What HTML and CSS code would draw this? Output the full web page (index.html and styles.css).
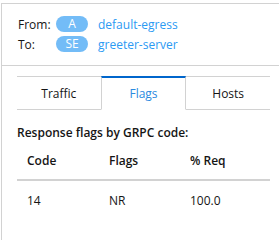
FILE: index.html
```html
<!DOCTYPE html>
<html lang="en">
<head>
<meta charset="UTF-8">
<meta name="viewport" content="width=device-width, initial-scale=1.0">
<title>Edge Flags</title>
<link rel="stylesheet" href="styles.css">
</head>
<body>
<div class="panel">
    <div class="panel-header">
        <div class="endpoint">
            <span class="endpoint-label">From:</span>
            <span class="badge">A</span>
            <a class="endpoint-link" href="#">default-egress</a>
        </div>
        <div class="endpoint">
            <span class="endpoint-label">To:</span>
            <span class="badge">SE</span>
            <a class="endpoint-link" href="#">greeter-server</a>
        </div>
    </div>
    <div class="panel-body">
        <div class="tabs">
            <button class="tab">Traffic</button>
            <button class="tab active">Flags</button>
            <button class="tab">Hosts</button>
        </div>
        <div class="section-title">Response flags by GRPC code:</div>
        <table class="flags-table">
            <thead>
                <tr>
                    <th class="col-code">Code</th>
                    <th class="col-flags">Flags</th>
                    <th>% Req</th>
                </tr>
            </thead>
            <tbody>
                <tr>
                    <td>14</td>
                    <td>NR</td>
                    <td>100.0</td>
                </tr>
            </tbody>
        </table>
    </div>
</div>
</body>
</html>
```

FILE: styles.css
```css
body {
    margin: 0;
    font-family: "Open Sans", sans-serif;
    font-size: 12px;
    color: #151515;
    background-color: #fff;
}
.panel {
    margin: 3px 0 0 1px;
    height: 237px;
    border-top: 1px solid #d2d2d2;
    border-left: 1px solid #d2d2d2;
    overflow: hidden;
}
.panel-header {
    padding: 10px 16px 11px;
    border-bottom: 1px solid #d2d2d2;
}
.endpoint {
    display: flex;
    align-items: center;
    height: 20px;
}
.endpoint-label {
    width: 38px;
}
.badge {
    width: 32px;
    height: 16px;
    line-height: 16px;
    border-radius: 8px;
    background-color: #73bcf7;
    color: #fff;
    text-align: center;
    margin-right: 10px;
}
.endpoint-link {
    color: #2b9af3;
    text-decoration: none;
}
.panel-body {
    padding: 10px 8px 0 15px;
}
.tabs {
    display: flex;
    width: 253px;
    border-top: 1px solid #d2d2d2;
}
.tab {
    flex: 1;
    height: 33px;
    border: none;
    border-bottom: 1px solid #d2d2d2;
    background: #fff;
    font-family: inherit;
    font-size: 12px;
    color: #151515;
    padding: 0;
}
.tab.active {
    border-left: 1px solid #d2d2d2;
    border-right: 1px solid #d2d2d2;
    border-bottom-color: transparent;
    border-top: 2px solid #0066cc;
    margin-top: -1px;
    height: 34px;
    color: #2b8ae0;
}
.section-title {
    margin-top: 14px;
    font-weight: 600;
}
.flags-table {
    width: 253px;
    border-collapse: collapse;
    margin-top: 4px;
}
.flags-table th,
.flags-table td {
    text-align: left;
    vertical-align: top;
    padding: 0 10px;
}
.flags-table th {
    font-weight: 600;
    padding-top: 7px;
    height: 27px;
    border-bottom: 2px solid #d2d2d2;
}
.flags-table td {
    padding-top: 11px;
    height: 29px;
}
.col-code {
    width: 62px;
}
.col-flags {
    width: 61px;
}
```
